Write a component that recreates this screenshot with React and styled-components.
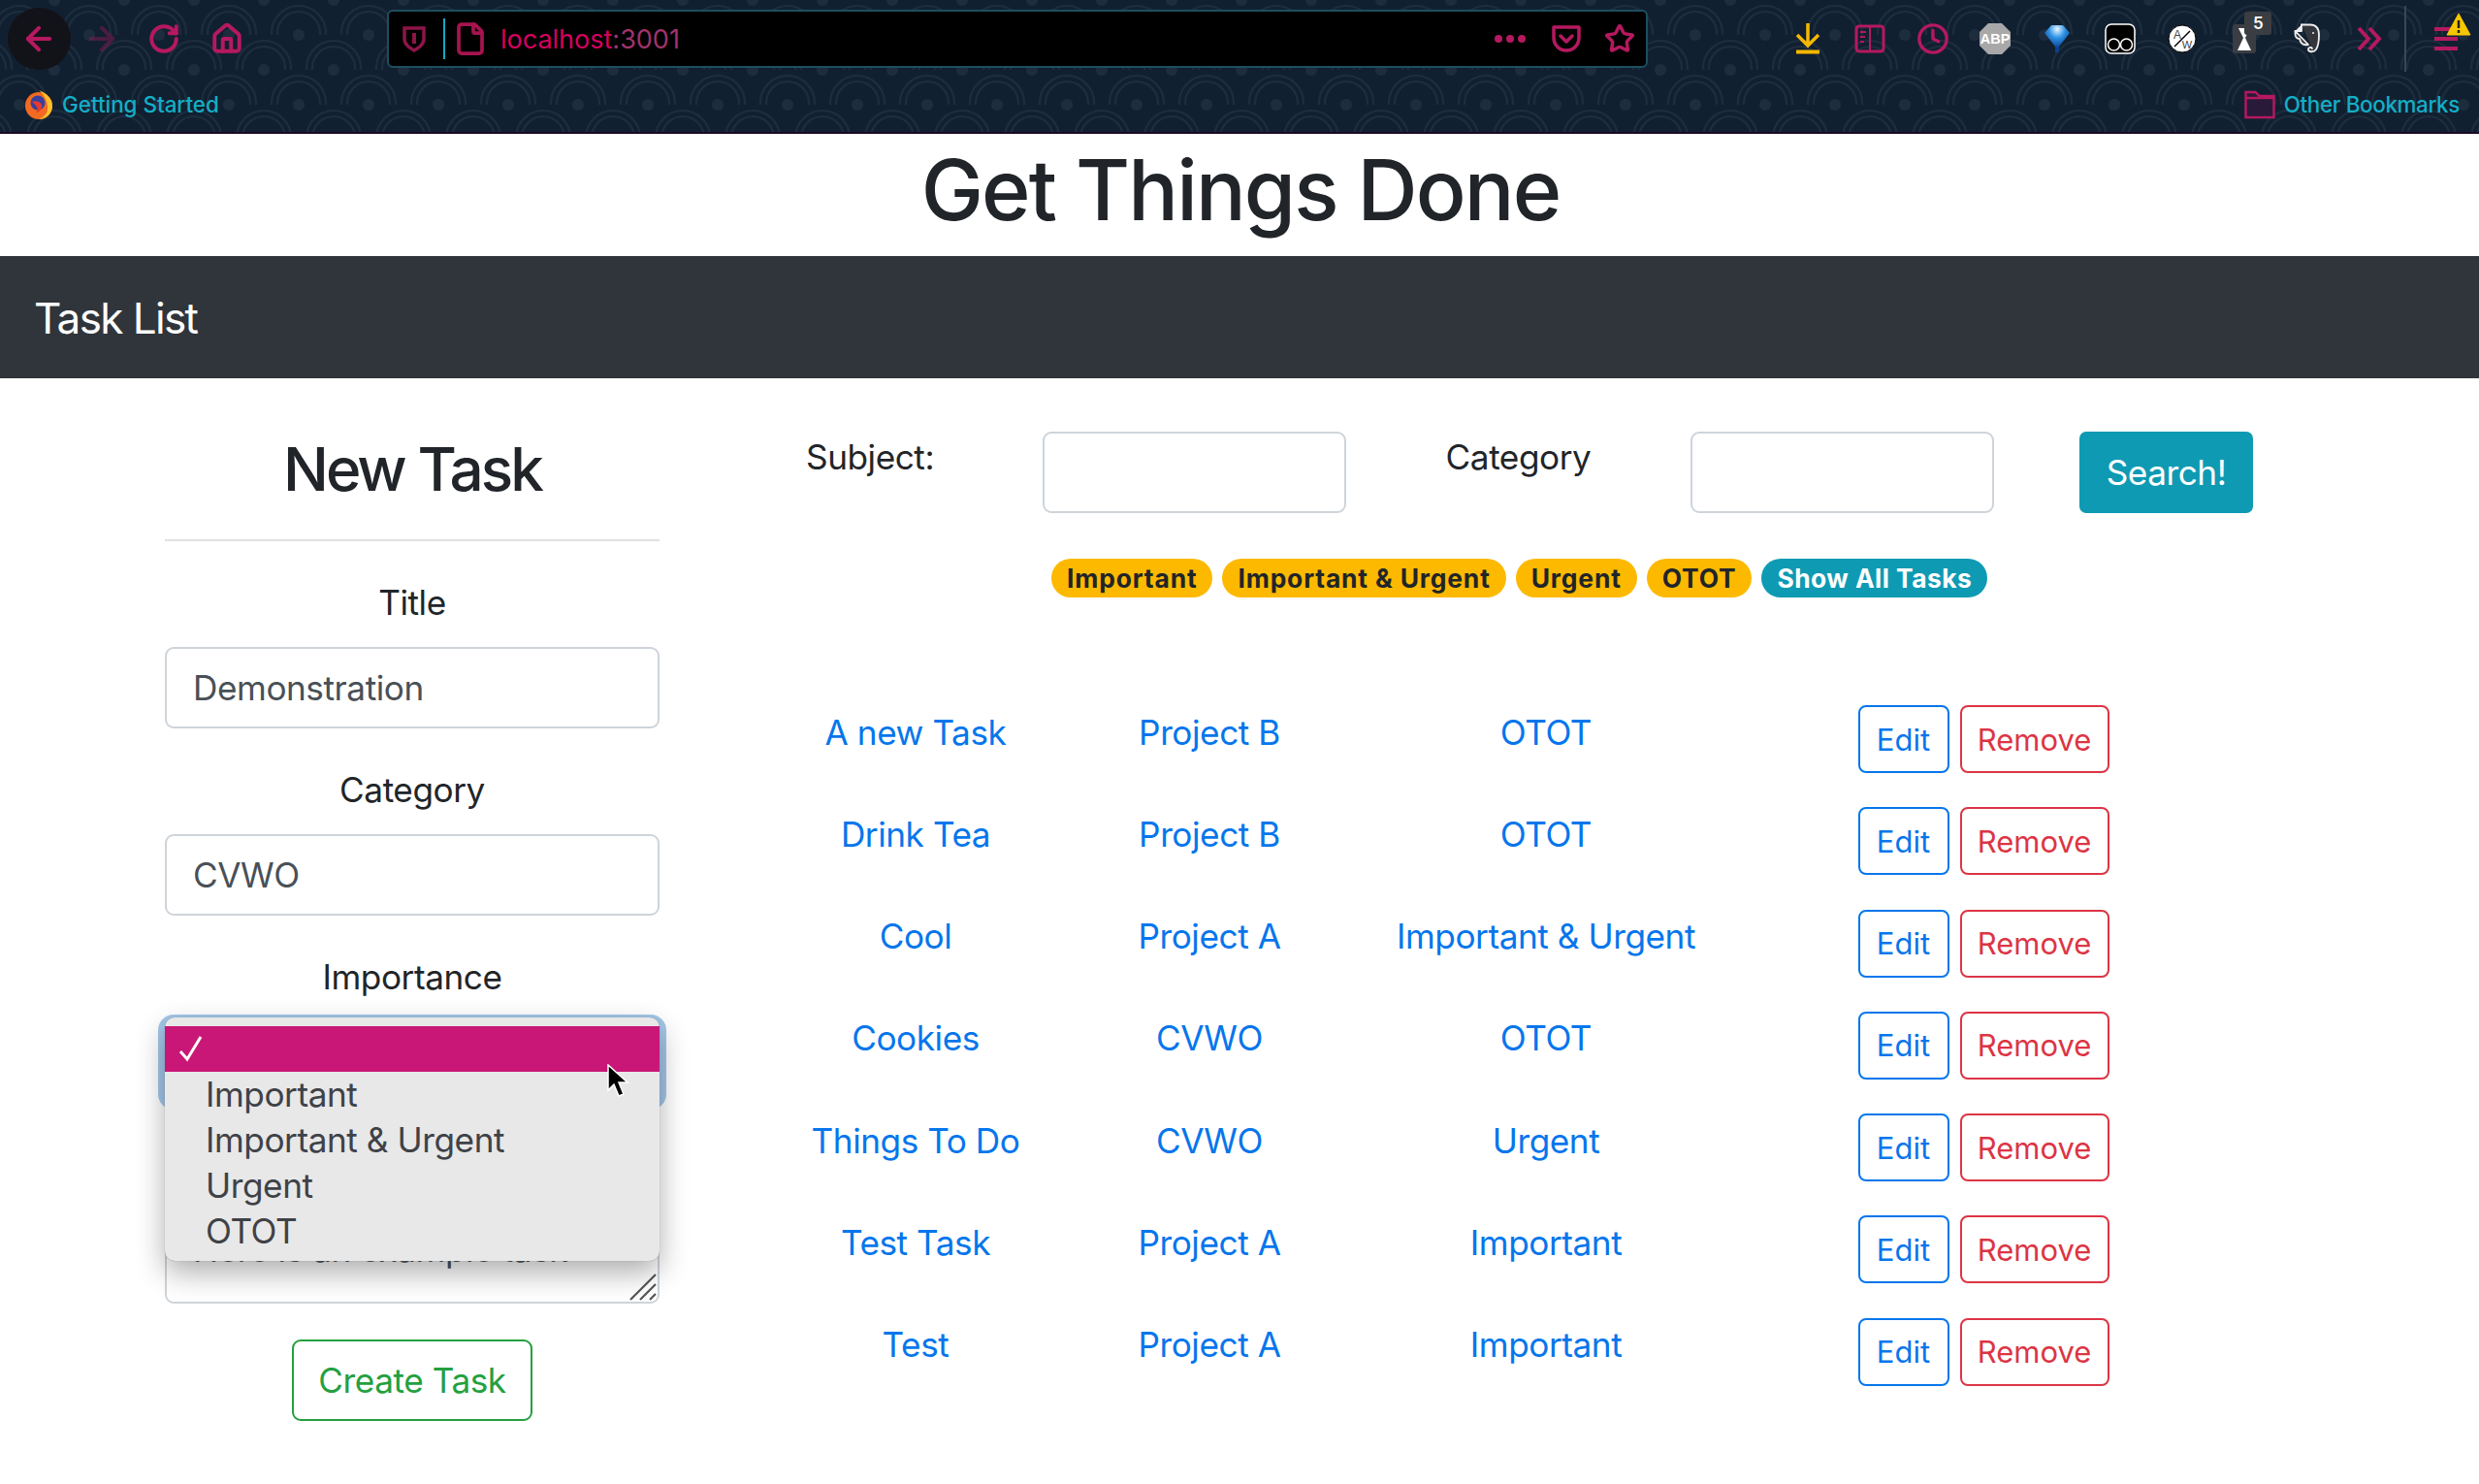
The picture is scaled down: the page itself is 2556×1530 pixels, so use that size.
import React from 'react';
import styled, { createGlobalStyle } from 'styled-components';
import { ArrowLeft, ArrowRight, RotateCw, House, File, Star, Clock } from 'lucide-react';

const PINK = '#b5195f';

const arcTile = encodeURIComponent(`<svg xmlns="http://www.w3.org/2000/svg" width="72" height="72"><g fill="none" stroke="#1d2d3e" stroke-width="2.2"><path d="M8 36v-2a28 28 0 0 1 56 0v2"/><path d="M14 36v-2a22 22 0 0 1 44 0v2"/><path d="M-28 72v-2a28 28 0 0 1 56 0v2"/><path d="M-22 72v-2a22 22 0 0 1 44 0v2"/><path d="M44 72v-2a28 28 0 0 1 56 0v2"/><path d="M50 72v-2a22 22 0 0 1 44 0v2"/></g><g fill="#1d2d3e"><circle cx="36" cy="36" r="6"/><circle cx="0" cy="0" r="6"/><circle cx="72" cy="0" r="6"/><circle cx="0" cy="72" r="6"/><circle cx="72" cy="72" r="6"/></g></svg>`);

const GlobalStyle = createGlobalStyle`
  * { box-sizing: border-box; }
  body {
    margin: 0;
    background: #fff;
    color: #212529;
    font-family: Inter, "Liberation Sans", sans-serif;
    font-size: 35.2px;
    line-height: 53px;
    letter-spacing: -0.45px;
  }
  input, textarea, button { letter-spacing: inherit; }
`;

const Chrome = styled.div`
  height: 138px;
  background-color: #112030;
  background-image: url("data:image/svg+xml,${arcTile}");
  background-position: -16px 0;
  border-bottom: 2px solid #1b0a26;
  letter-spacing: 0;
  overflow: hidden;
`;

const NavRow = styled.div`
  height: 80px;
  display: flex;
  align-items: center;
  position: relative;
`;

const NavButtons = styled.div`
  width: 399px;
  display: flex;
  align-items: center;
  padding-left: 8px;
`;

const RoundButton = styled.div`
  width: 64.5px;
  height: 64px;
  display: flex;
  align-items: center;
  justify-content: center;
  flex: none;
  border-radius: 50%;
  background: ${(p) => (p.$active ? '#121318' : 'transparent')};
  color: ${PINK};
  opacity: ${(p) => (p.$dim ? 0.35 : 1)};
`;

const UrlBar = styled.div`
  width: 1300px;
  height: 60px;
  background: #000;
  border: 2px solid #1d4f60;
  border-radius: 6px;
  display: flex;
  align-items: center;
  padding-left: 14px;
  color: ${PINK};
`;

const UrlDivider = styled.span`
  width: 2px;
  height: 42px;
  background: #17a9c2;
  margin: 0 8px 0 18px;
`;

const UrlText = styled.span`
  flex: 1;
  margin-left: 13px;
  padding-top: 2px;
  font-size: 27px;
  line-height: 40px;
  color: #d6005f;

  b {
    font-weight: 400;
    color: #a2336b;
  }
`;

const Dots = styled.span`
  display: flex;
  gap: 4px;
  margin-right: 26px;

  i {
    width: 8px;
    height: 8px;
    border-radius: 50%;
    background: ${PINK};
  }
`;

const StarSlot = styled.span`
  display: flex;
  margin: 0 11px 0 23px;
`;

const ToolIcons = styled.div`
  display: flex;
  align-items: center;
  margin-left: 133px;
`;

const ToolSlot = styled.div`
  width: 64.3px;
  height: 40px;
  flex: none;
  display: flex;
  align-items: center;
  justify-content: center;
  position: relative;
  margin-left: ${(p) => p.$shift || 0};
`;

const CountBadge = styled.span`
  position: absolute;
  top: -8px;
  right: 4px;
  width: 28px;
  height: 24px;
  border-radius: 3px;
  background: #3a3d42;
  color: #fff;
  font-size: 17px;
  font-weight: 600;
  line-height: 24px;
  text-align: center;
`;

const ToolDivider = styled.span`
  width: 2px;
  height: 68px;
  background: #3c4652;
  margin-left: 4px;
`;

const Warning = styled.svg`
  position: absolute;
  right: 8px;
  top: 13px;
`;

const BookmarkRow = styled.div`
  height: 56px;
  display: flex;
  align-items: center;
  justify-content: space-between;
  padding: 0 20px 0 25px;
`;

const Bookmark = styled.div`
  display: flex;
  align-items: center;
  gap: 9px;
  font-size: 22.4px;
  line-height: 30px;
  font-weight: 500;
  letter-spacing: ${(p) => (p.$tight ? '-0.35px' : '0')};
  color: #14aec6;
`;

const PageTitle = styled.h1`
  margin: 0;
  height: 126px;
  padding-left: 2px;
  font-size: 86px;
  font-weight: 500;
  line-height: 116px;
  letter-spacing: -1.9px;
  text-align: center;
`;

const NavBar = styled.nav`
  height: 126px;
  padding-left: 35px;
  background: #2f353b;
  color: #fff;
  font-size: 44px;
  line-height: 128px;
  letter-spacing: -1.6px;
`;

const Main = styled.main`
  display: flex;
  align-items: flex-start;
  padding: 52px 0 0 170px;
`;

const FormColumn = styled.form`
  width: 510px;
  margin-right: 151px;
  text-align: center;
`;

const FormHeading = styled.h2`
  margin: 0;
  font-size: 62px;
  font-weight: 500;
  line-height: 84px;
  letter-spacing: -2.9px;
`;

const Rule = styled.hr`
  margin: 30px 0 37px;
  border: 0;
  border-top: 2px solid #dfe1e3;
`;

const Field = styled.div`
  margin-bottom: 37px;
  position: relative;
`;

const FieldLabel = styled.label`
  display: block;
  min-height: 53px;
  margin-bottom: 19px;
`;

const TextInput = styled.input`
  display: block;
  width: ${(p) => p.$width || '100%'};
  height: 84px;
  flex: none;
  padding: 0 27px;
  border: 2px solid #ced4da;
  border-radius: 9px;
  background: #fff;
  color: #495057;
  font: inherit;
`;

const SelectBox = styled.div`
  height: 84px;
  border-radius: 9px;
  background: #fff;
  box-shadow: 0 0 0 7px #a3c7ea;
`;

const OptionPopup = styled.ul`
  position: absolute;
  left: 0;
  right: 0;
  top: 68px;
  z-index: 2;
  margin: 0;
  padding: 9px 0 7px;
  list-style: none;
  background: #e8e8e8;
  border-radius: 10px;
  box-shadow: 0 0 1px #777, 0 12px 30px rgba(0, 0, 0, 0.32);
  color: #3f4247;
  line-height: 47px;
  text-align: left;
`;

const OptionRow = styled.li`
  height: 47px;
  padding-left: 42px;
  position: relative;
  background: ${(p) => (p.$selected ? '#c81776' : 'transparent')};
`;

const CheckMark = styled.svg`
  position: absolute;
  left: 14px;
  top: 9px;
`;

const PointerMark = styled.svg`
  position: absolute;
  left: 455px;
  top: 116px;
  z-index: 3;
`;

const TextBox = styled.textarea`
  display: block;
  width: 100%;
  height: 98px;
  padding: 14px 27px;
  border: 2px solid #ced4da;
  border-radius: 9px;
  color: #495057;
  font: inherit;
  resize: none;
`;

const ResizeGrip = styled.svg`
  position: absolute;
  right: 3px;
  bottom: 3px;
`;

const CreateButton = styled.button`
  width: 248px;
  height: 84px;
  border: 2px solid #24a03f;
  border-radius: 9px;
  background: #fff;
  color: #24a03f;
  font: inherit;
`;

const TasksColumn = styled.section`
  flex: 1;
  min-width: 0;
  padding-top: 3px;
`;

const SearchRow = styled.div`
  display: flex;
  align-items: flex-start;
`;

const SearchLabel = styled.label`
  width: ${(p) => p.$width};
  flex: none;
  text-align: ${(p) => p.$align || 'left'};
`;

const SearchButton = styled.button`
  width: 179px;
  height: 84px;
  margin-left: 88px;
  border: 0;
  border-radius: 7px;
  background: #0f9ab3;
  color: #fff;
  font: inherit;
`;

const BadgeRow = styled.div`
  display: flex;
  justify-content: flex-start;
  gap: 10px;
  margin: 46.5px 0 111.5px 253px;
`;

const Badge = styled.span`
  height: 40px;
  padding: 0 16px;
  border-radius: 20px;
  background: ${(p) => (p.$info ? '#0f9ab3' : '#fdb900')};
  color: ${(p) => (p.$info ? '#fff' : '#212529')};
  font-size: 26.4px;
  font-weight: 700;
  line-height: 40px;
  letter-spacing: ${(p) => (p.$info ? '0.45px' : '0.85px')};
`;

const TaskGrid = styled.div`
  display: grid;
  grid-template-columns: 226px 380px 314px 164.5px auto;
  row-gap: 35.3px;
  justify-content: start;
`;

const TaskCell = styled.div`
  display: flex;
  justify-content: center;
  padding-top: 1.5px;
  color: #0676ec;
  white-space: nowrap;
`;

const RowActions = styled.div`
  display: flex;
  gap: 11px;
`;

const OutlineButton = styled.button`
  width: ${(p) => p.$width};
  height: 70px;
  padding: 0;
  border: 2px solid ${(p) => p.$color};
  border-radius: 8px;
  background: #fff;
  color: ${(p) => p.$color};
  font: inherit;
  font-size: 31px;
  letter-spacing: 0;
`;

const tasks = [
  ['A new Task', 'Project B', 'OTOT'],
  ['Drink Tea', 'Project B', 'OTOT'],
  ['Cool', 'Project A', 'Important & Urgent'],
  ['Cookies', 'CVWO', 'OTOT'],
  ['Things To Do', 'CVWO', 'Urgent'],
  ['Test Task', 'Project A', 'Important'],
  ['Test', 'Project A', 'Important'],
];

const importance = ['Important', 'Important & Urgent', 'Urgent', 'OTOT'];

function ShieldIcon() {
  return (
    <svg width="24" height="28" viewBox="0 0 24 28" fill="none">
      <path d="M2 3h20v11c0 6-5 9-10 12C7 23 2 20 2 14z" stroke="#8d1548" strokeWidth="3.5" />
      <path d="M12 8v11" stroke="#8d1548" strokeWidth="4" />
    </svg>
  );
}

function PocketIcon() {
  return (
    <svg width="32" height="30" viewBox="0 0 32 30" fill="none" stroke={PINK} strokeWidth="3.5">
      <path d="M3 3h26v11a13 13 0 0 1-26 0z" strokeLinejoin="round" />
      <path d="M10 12l6 6 6-6" strokeLinecap="round" strokeLinejoin="round" />
    </svg>
  );
}

function FirefoxLogo() {
  return (
    <svg width="30" height="32" viewBox="0 0 30 32">
      <circle cx="15" cy="17" r="14" fill="#f26a21" />
      <path d="M15 1c8 3 14 9 14 16 0 8-6 14-14 14 7-3 10-8 9-14C23 11 20 5 15 1z" fill="#ffbf2e" />
      <circle cx="14" cy="14" r="7.5" fill="#35409f" />
      <path d="M8 13c4-2 9 0 10 3s-2 8-6 8c3-3 2-6-4-11z" fill="#e8382e" />
    </svg>
  );
}

function DownloadIcon() {
  return (
    <svg width="26" height="32" viewBox="0 0 26 32" fill="none" stroke="#f5b700" strokeWidth="3.5">
      <path d="M13 0v22M2 12l11 11 11-11" />
      <path d="M1 29.5h24" strokeWidth="4" />
    </svg>
  );
}

function SidebarIcon() {
  return (
    <svg width="32" height="30" viewBox="0 0 32 30" fill="none" stroke={PINK} strokeWidth="3">
      <rect x="2" y="2" width="28" height="26" rx="3" />
      <path d="M16 2v26" strokeWidth="2" />
      <path d="M6 8h6M6 13h5M6 18h4" strokeWidth="2" />
    </svg>
  );
}

function AbpIcon() {
  return (
    <svg width="34" height="34" viewBox="0 0 34 34">
      <path d="M10 1h14l9 9v14l-9 9H10l-9-9V10z" fill="#a8a8a8" />
      <text x="17" y="22" fontFamily="Liberation Sans" fontSize="14.5" fontWeight="700" fill="#fff" textAnchor="middle">ABP</text>
    </svg>
  );
}

function GemIcon() {
  return (
    <svg width="28" height="30" viewBox="0 0 28 30">
      <defs>
        <radialGradient id="gemShine" cx="0.5" cy="0.15" r="0.7">
          <stop offset="0" stopColor="#e8f7ff" />
          <stop offset="0.45" stopColor="#2e93e6" />
          <stop offset="1" stopColor="#0b3f8c" />
        </radialGradient>
      </defs>
      <path d="M1 9L8 1h12l7 8-11 14v6h-4v-6z" fill="url(#gemShine)" />
    </svg>
  );
}

function GlassesIcon() {
  return (
    <svg width="32" height="32" viewBox="0 0 32 32" fill="#000" stroke="#fff" strokeWidth="1.5">
      <rect x="1" y="1" width="30" height="30" rx="6" />
      <circle cx="9.5" cy="22" r="6" />
      <circle cx="22.5" cy="22" r="6" />
    </svg>
  );
}

function AwIcon() {
  return (
    <svg width="30" height="30" viewBox="0 0 30 30">
      <circle cx="15" cy="15" r="14" fill="#fff" stroke="#000" />
      <path d="M7 23L23 7" stroke="#000" strokeWidth="1.4" />
      <text x="10" y="15" fontFamily="Liberation Sans" fontSize="12" fill="#444" textAnchor="middle">A</text>
      <text x="20" y="25" fontFamily="Liberation Sans" fontSize="11" fill="#444" textAnchor="middle">W</text>
    </svg>
  );
}

function HourglassIcon() {
  return (
    <svg width="24" height="30" viewBox="0 0 24 30">
      <rect width="24" height="30" rx="3" fill="#3a3d42" />
      <path d="M6 4h12l-5 10 6 13H5l6-13z" fill="#fff" />
    </svg>
  );
}

function ElephantIcon() {
  return (
    <svg width="28" height="32" viewBox="0 0 28 32" fill="#33363c" stroke="#eee" strokeWidth="1.8" strokeLinejoin="round" strokeLinecap="round">
      <path d="M8 1.5H17C23 1.5 26 5 26 12C26 19 25 24 23 27C21 30 15 30 15 27C15 24.500 18 24 19 26M15 22C10 23 7 21 6 16C3 16 1.500 14 1.500 11V8z" />
      <path d="M8 1.500V8H1.500" fill="#eee" />
      <circle cx="20" cy="10" r="1" fill="#eee" stroke="none" />
    </svg>
  );
}

function ChevronsIcon() {
  return (
    <svg width="26" height="26" viewBox="0 0 26 26" fill="none" stroke={PINK} strokeWidth="4">
      <path d="M2 2l10 11L2 24M13 2l10 11-10 11" />
    </svg>
  );
}

function BurgerIcon() {
  return (
    <svg width="26" height="26" viewBox="0 0 26 26" stroke={PINK} strokeWidth="4">
      <path d="M0 3h24M0 13h24M0 23h24" />
    </svg>
  );
}

function FolderIcon() {
  return (
    <svg width="32" height="32" viewBox="0 0 32 32" fill="#2a1a3a" stroke={PINK} strokeWidth="2.4">
      <path d="M1.500 3h10l4 4h15v22h-29z" />
      <path d="M1.500 9h29" fill="none" />
    </svg>
  );
}

function App() {
  return (
    <>
      <GlobalStyle />
      <Chrome>
        <NavRow>
          <NavButtons>
            <RoundButton $active><ArrowLeft size={38} strokeWidth={2.6} /></RoundButton>
            <RoundButton $dim><ArrowRight size={38} strokeWidth={2.6} /></RoundButton>
            <RoundButton><RotateCw size={34} strokeWidth={2.8} /></RoundButton>
            <RoundButton><House size={34} strokeWidth={2.8} /></RoundButton>
          </NavButtons>
          <UrlBar>
            <ShieldIcon />
            <UrlDivider />
            <File size={36} strokeWidth={2.5} color="#a5144f" />
            <UrlText>localhost<b>:3001</b></UrlText>
            <Dots><i /><i /><i /></Dots>
            <PocketIcon />
            <StarSlot><Star size={32} strokeWidth={2.6} /></StarSlot>
          </UrlBar>
          <ToolIcons>
            <ToolSlot><DownloadIcon /></ToolSlot>
            <ToolSlot><SidebarIcon /></ToolSlot>
            <ToolSlot><Clock size={34} strokeWidth={2.4} color={PINK} /></ToolSlot>
            <ToolSlot><AbpIcon /></ToolSlot>
            <ToolSlot><GemIcon /></ToolSlot>
            <ToolSlot><GlassesIcon /></ToolSlot>
            <ToolSlot><AwIcon /></ToolSlot>
            <ToolSlot><HourglassIcon /><CountBadge>5</CountBadge></ToolSlot>
            <ToolSlot><ElephantIcon /></ToolSlot>
            <ToolSlot><ChevronsIcon /></ToolSlot>
            <ToolDivider />
            <ToolSlot $shift="10px"><BurgerIcon /></ToolSlot>
          </ToolIcons>
          <Warning width="26" height="24" viewBox="0 0 26 24">
            <path d="M13 1l12 22H1z" fill="#f6c700" stroke="#f6c700" strokeLinejoin="round" />
            <path d="M13 8v8M13 18v3" stroke="#222" strokeWidth="2.5" />
          </Warning>
        </NavRow>
        <BookmarkRow>
          <Bookmark><FirefoxLogo />Getting Started</Bookmark>
          <Bookmark $tight><FolderIcon />Other Bookmarks</Bookmark>
        </BookmarkRow>
      </Chrome>

      <PageTitle>Get Things Done</PageTitle>
      <NavBar>Task List</NavBar>

      <Main>
        <FormColumn>
          <FormHeading>New Task</FormHeading>
          <Rule />
          <Field>
            <FieldLabel>Title</FieldLabel>
            <TextInput defaultValue="Demonstration" />
          </Field>
          <Field>
            <FieldLabel>Category</FieldLabel>
            <TextInput defaultValue="CVWO" />
          </Field>
          <Field>
            <FieldLabel>Importance</FieldLabel>
            <SelectBox />
            <OptionPopup>
              <OptionRow $selected>
                <CheckMark width="26" height="28" viewBox="0 0 26 28" fill="none" stroke="#fff" strokeWidth="3">
                  <path d="M2 17l7 8L23 2" />
                </CheckMark>
              </OptionRow>
              {importance.map((name) => (
                <OptionRow key={name}>{name}</OptionRow>
              ))}
            </OptionPopup>
            <PointerMark width="24" height="36" viewBox="0 0 24 36">
              <path d="M2 1v26l6-6 5 12 5-2-5-12h9z" fill="#000" stroke="#fff" strokeWidth="1.5" />
            </PointerMark>
          </Field>
          <Field>
            {/* the label sits under the open dropdown, so only its space is kept */}
            <FieldLabel />
            <TextBox defaultValue="Here is an example task" />
            <ResizeGrip width="28" height="28" viewBox="0 0 28 28" stroke="#555" strokeWidth="2.2">
              <path d="M1 27L27 1M11 27L27 11M21 27l6-6" />
            </ResizeGrip>
          </Field>
          <CreateButton type="button">Create Task</CreateButton>
        </FormColumn>

        <TasksColumn>
          <SearchRow>
            <SearchLabel $width="244px">Subject:</SearchLabel>
            <TextInput $width="313px" />
            <SearchLabel $width="355px" $align="center">Category</SearchLabel>
            <TextInput $width="313px" />
            <SearchButton type="button">Search!</SearchButton>
          </SearchRow>
          <BadgeRow>
            {importance.map((name) => (
              <Badge key={name}>{name}</Badge>
            ))}
            <Badge $info>Show All Tasks</Badge>
          </BadgeRow>
          <TaskGrid>
            {tasks.map(([title, category, level]) => (
              <React.Fragment key={title}>
                <TaskCell>{title}</TaskCell>
                <TaskCell>{category}</TaskCell>
                <TaskCell>{level}</TaskCell>
                <span />
                <RowActions>
                  <OutlineButton $width="94px" $color="#0676ec">Edit</OutlineButton>
                  <OutlineButton $width="154px" $color="#dc3545">Remove</OutlineButton>
                </RowActions>
              </React.Fragment>
            ))}
          </TaskGrid>
        </TasksColumn>
      </Main>
    </>
  );
}

export default App;
